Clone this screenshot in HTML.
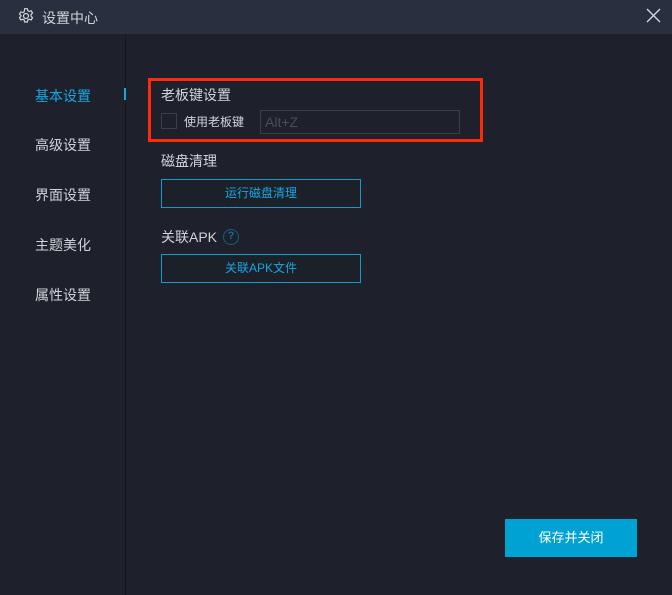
<!DOCTYPE html>
<html><head><meta charset="utf-8"><style>
*{margin:0;padding:0;box-sizing:border-box}
body{width:672px;height:595px;background:#1e212c;font-family:"Liberation Sans","Noto Sans CJK SC",sans-serif;position:relative;overflow:hidden;color:#d0d3d9}
.hdr{position:absolute;left:0;top:0;width:672px;height:34px;background:#292f3f}
.t{position:absolute;font-size:14px;white-space:nowrap;line-height:16px}
.div{position:absolute;left:125px;top:34px;width:1px;height:561px;background:#15171e}
.btn{position:absolute;border:1px solid #0f9ccd;color:#14a8e0;font-size:12px;text-align:center;background:#1c2029}
</style></head><body>
<div class="hdr"></div>
<svg style="position:absolute;left:17px;top:7px" width="18" height="18" viewBox="0 0 16 16" fill="none" stroke="#d0d3d9" stroke-width="1.1"><path d="M6.8 1.5h2.4l.4 1.8 1.3.7 1.7-.7 1.2 2-1.3 1.3v1.6l1.3 1.3-1.2 2-1.7-.7-1.3.7-.4 1.8H6.8l-.4-1.8-1.3-.7-1.7.7-1.2-2 1.3-1.3V7.6L2.2 6.3l1.2-2 1.7.7 1.3-.7z"/><circle cx="8" cy="8" r="2.2"/></svg>
<div class="t" style="left:42px;top:10px">设置中心</div>
<svg style="position:absolute;left:646px;top:8px" width="15" height="15" viewBox="0 0 15 15" stroke="#d8dbe0" stroke-width="1.3"><path d="M1 1L14 14M14 1L1 14"/></svg>
<div class="div"></div>
<div class="t" style="left:35px;top:88px;color:#14a8e0">基本设置</div>
<div style="position:absolute;left:124px;top:88px;width:2px;height:12px;background:#14a8e0"></div>
<div class="t" style="left:35px;top:137px">高级设置</div>
<div class="t" style="left:35px;top:187px">界面设置</div>
<div class="t" style="left:35px;top:237px">主题美化</div>
<div class="t" style="left:35px;top:287px">属性设置</div>
<div style="position:absolute;left:148px;top:78px;width:335px;height:64px;border:3px solid #ff2a0a"></div>
<div class="t" style="left:161px;top:87px">老板键设置</div>
<div style="position:absolute;left:161px;top:113px;width:16px;height:16px;border:1px solid #3a3e48"></div>
<div class="t" style="left:184px;top:114px;font-size:12px">使用老板键</div>
<div style="position:absolute;left:260px;top:110px;width:200px;height:24px;border:1px solid #3a3e48;color:#4a4e58;font-size:14px;padding:3px 4px">Alt+Z</div>
<div class="t" style="left:161px;top:153px">磁盘清理</div>
<div class="btn" style="left:161px;top:179px;width:200px;height:29px;line-height:27px">运行磁盘清理</div>
<div class="t" style="left:161px;top:229px">关联APK</div>
<div style="position:absolute;left:223px;top:229px;width:16px;height:16px;border:1.5px solid #1a5a80;border-radius:50%;color:#1a6a95;font-size:11px;text-align:center;line-height:13px;font-weight:bold">?</div>
<div class="btn" style="left:161px;top:254px;width:200px;height:29px;line-height:27px">关联APK文件</div>
<div style="position:absolute;left:505px;top:519px;width:132px;height:38px;background:#00a2d4;color:#fff;font-size:13px;text-align:center;line-height:38px">保存并关闭</div>
</body></html>
